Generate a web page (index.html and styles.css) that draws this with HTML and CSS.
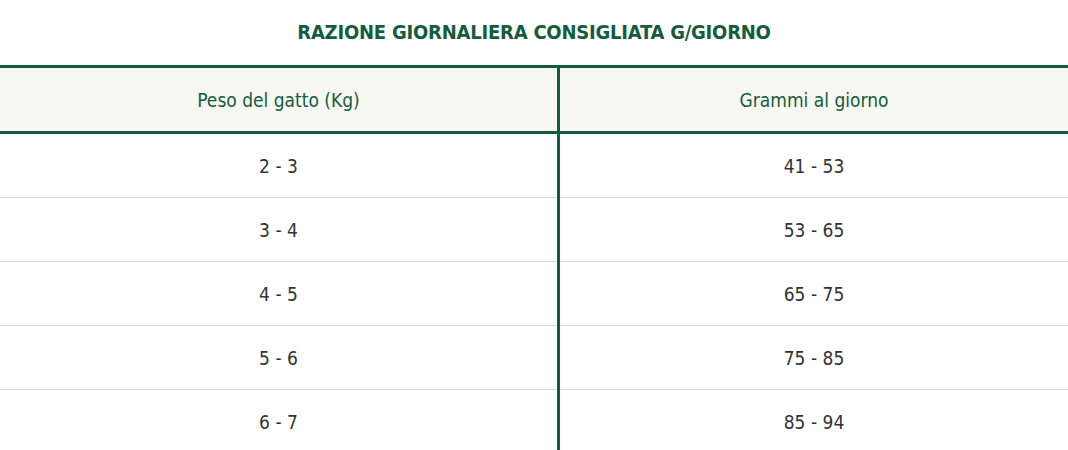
FILE: index.html
```html
<!DOCTYPE html>
<html lang="it">
<head>
<meta charset="utf-8">
<link rel="stylesheet" href="styles.css">
</head>
<body>
<div class="wrap">
  <h2 class="title">RAZIONE GIORNALIERA CONSIGLIATA G/GIORNO</h2>
  <table class="ration">
    <thead>
      <tr><th>Peso del gatto (Kg)</th><th>Grammi al giorno</th></tr>
    </thead>
    <tbody>
      <tr><td>2 - 3</td><td>41 - 53</td></tr>
      <tr><td>3 - 4</td><td>53 - 65</td></tr>
      <tr><td>4 - 5</td><td>65 - 75</td></tr>
      <tr><td>5 - 6</td><td>75 - 85</td></tr>
      <tr><td>6 - 7</td><td>85 - 94</td></tr>
    </tbody>
  </table>
</div>
</body>
</html>
```
FILE: styles.css
```css
html, body {
  margin: 0;
  padding: 0;
  background: #ffffff;
}
.wrap {
  width: 1068px;
  font-family: "DejaVu Sans Condensed", "DejaVu Sans", sans-serif;
}
.title {
  margin: 0;
  height: 65px;
  line-height: 64px;
  text-align: center;
  font-size: 20px;
  font-weight: bold;
  color: #135c3e;
  letter-spacing: -0.22px;
}
.ration {
  width: 100%;
  border-collapse: collapse;
  table-layout: fixed;
}
.ration th, .ration td {
  text-align: center;
  padding: 0;
  font-size: 19px;
}
.ration th {
  height: 63px;
  background: #f8f8f3;
  color: #135c3e;
  font-weight: normal;
  border-top: 3px solid #135c3e;
  border-bottom: 3px solid #135c3e;
}
.ration td {
  height: 63px;
  color: #333333;
  border-bottom: 1px solid #d6d6d6;
}
.ration th:first-child, .ration td:first-child {
  width: 557px;
  border-right: 3px solid #135c3e;
}
```
